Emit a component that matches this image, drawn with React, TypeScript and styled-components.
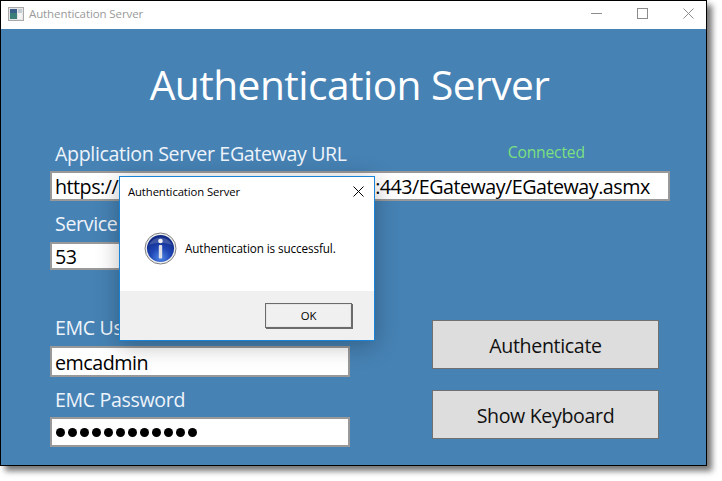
import React from "react";
import styled, { createGlobalStyle } from "styled-components";

const Global = createGlobalStyle`
  html, body { margin: 0; padding: 0; background: #fff; }
  body { font-family: "Open Sans", "Noto Sans", sans-serif; width: 722px; height: 481px; overflow: hidden; }
  * { box-sizing: border-box; }
`;

const Win = styled.div`
  position: relative; width: 707px; height: 466px; border: 1px solid #000;
  box-shadow: 5px 5px 6px rgba(0,0,0,.55);
  display: flex; flex-direction: column; background: #4682b4;
`;
const TitleBar = styled.div`
  height: 28px; flex: none; background: #fff; display: flex; align-items: center; padding: 0 0 3px 7px; gap: 5px;
`;
const BarText = styled.span`
  font-size: 11.5px; color: #9a9a9a; letter-spacing: -.1px;
`;
const WinButtons = styled.div`
  margin-left: auto; margin-right: -5px; display: flex; align-items: center;
`;
const WinBtn = styled.span`
  width: 46px; height: 25px; display: flex; align-items: center; justify-content: center; color: #8c8c8c;
`;
const Content = styled.div`
  flex: 1; padding: 0 36px 0 49px; display: flex; flex-direction: column; color: #fff;
`;
const Heading = styled.h1`
  margin: 28px 21px 0 0; font-size: 40.7px; line-height: 54px; font-weight: 400; text-align: center; letter-spacing: -.55px;
`;
const HeaderRow = styled.div`
  display: flex; margin-top: 30px; height: 30px;
`;
const Label = styled.label`
  display: block; font-size: 19.6px; line-height: 26px; padding-left: 5px; letter-spacing: -.35px; color: #eef4fb;
`;
const Status = styled.span`
  margin-left: 161px; font-size: 15.7px; line-height: 20px; color: #7be07f; letter-spacing: -.2px; margin-top: 1px;
`;
const Field = styled.input<{ $w: number; $h?: number }>`
  display: block; width: ${p => p.$w}px; height: ${p => p.$h ?? 30}px; border: 2px solid #999; background: #fff; outline: none;
  font: 400 19.7px "Open Sans", sans-serif; letter-spacing: -.5px; color: #000; padding: 1px 2px 0 3px; border-radius: 0;
`;
const Dots = styled.div`
  width: 300px; height: 30px; border: 2px solid #999; background: #fff; padding: 1px 0 0 4px;
  display: flex; align-items: center; gap: 3px;
`;
const Dot = styled.span`
  width: 9px; height: 9px; border-radius: 50%; background: #000; flex: none;
`;
const ServiceBlock = styled.div`
  margin-top: 10px; display: flex; flex-direction: column; gap: 5px;
`;
const Lower = styled.div`
  margin-top: 45px; display: flex; justify-content: space-between;
`;
const LeftCol = styled.div`
  display: flex; flex-direction: column; width: 300px;
`;
const UserLabel = styled(Label)`
  margin-bottom: 5px;
`;
const PassLabel = styled(Label)`
  margin: 10px 0 4px;
`;
const RightCol = styled.div`
  display: flex; flex-direction: column; gap: 21px; margin-top: 5px; margin-right: 11px;
`;
const BigBtn = styled.button`
  width: 227px; height: 49px; background: #ddd; border: 1px solid #707070; border-radius: 0; color: #111;
  font: 400 19.6px "Open Sans", sans-serif; letter-spacing: -.35px; padding: 1px 0 0;
`;
const Dialog = styled.div`
  position: absolute; left: 118px; top: 175px; width: 256px; height: 165px; border: 1px solid #1883d7;
  background: #fff; display: flex; flex-direction: column; box-shadow: 0 4px 22px rgba(0,0,0,.28);
`;
const DlgHead = styled.div`
  height: 28px; display: flex; align-items: center; justify-content: space-between; padding: 0 10px 0 8px;
  font-size: 11.3px; letter-spacing: -.1px; color: #000;
`;
const DlgBody = styled.div`
  flex: 1; display: flex; align-items: center; gap: 8px; padding: 0 0 0 24px; font-size: 11.7px; letter-spacing: -.1px; color: #000;
`;
const DlgFoot = styled.div`
  height: 49px; flex: none; background: #f0f0f0; display: flex; justify-content: flex-end; align-items: flex-start; padding: 12px 22px 0 0;
`;
const OkBtn = styled.button`
  width: 87px; height: 25px; background: #f0f0f0; border: 1px solid #6b6b6b; box-shadow: inset 0 0 0 1px #e6e6e6, 1px 1px 0 #6b6b6b;
  font: 400 11.3px "Open Sans", sans-serif; color: #000; padding: 0; border-radius: 0;
`;

const InfoIcon = () => (
  <svg width="33" height="33" viewBox="0 0 33 33" style={{ flex: "none" }}>
    <defs>
      <radialGradient id="ib" cx="50%" cy="85%" r="75%">
        <stop offset="0" stopColor="#4f86e6" />
        <stop offset=".5" stopColor="#1f46b4" />
        <stop offset="1" stopColor="#102a86" />
      </radialGradient>
    </defs>
    <circle cx="16.5" cy="16.5" r="15.5" fill="#efefef" stroke="#7f7f7f" />
    <circle cx="16.5" cy="16.5" r="13.6" fill="url(#ib)" />
    <path d="M5 13 A12.5 12.5 0 0 1 28 13 Q16 8 5 13Z" fill="#fff" opacity=".18" />
    <circle cx="16.5" cy="9" r="2.3" fill="#f2f2f2" />
    <rect x="14.8" y="13" width="3.4" height="13.5" rx="1" fill="#dfe1e6" />
  </svg>
);

const AppIcon = () => (
  <svg width="16" height="14" viewBox="0 0 16 14">
    <rect x=".5" y=".5" width="15" height="13" fill="#e6e6e6" stroke="#a9a9a9" />
    <rect x="2" y="2" width="7" height="10" fill="#3c7f78" />
    <rect x="2" y="2" width="7" height="4" fill="#3a5f8a" />
    <rect x="10" y="2" width="4" height="4" fill="#c4ccd4" />
    <rect x="10" y="6" width="4" height="6" fill="#f4f4f4" />
  </svg>
);

export default function App() {
  return (
    <>
      <Global />
      <Win>
        <TitleBar>
          <AppIcon />
          <BarText>Authentication Server</BarText>
          <WinButtons>
            <WinBtn>
              <svg width="11" height="11" viewBox="0 0 11 11"><path d="M0 5.5H11" stroke="currentColor" /></svg>
            </WinBtn>
            <WinBtn>
              <svg width="11" height="11" viewBox="0 0 11 11"><rect x=".5" y=".5" width="10" height="10" fill="none" stroke="currentColor" /></svg>
            </WinBtn>
            <WinBtn>
              <svg width="11" height="11" viewBox="0 0 11 11"><path d="M.5.5L10.5 10.5M10.5.5L.5 10.5" stroke="currentColor" /></svg>
            </WinBtn>
          </WinButtons>
        </TitleBar>
        <Content>
          <Heading>Authentication Server</Heading>
          <HeaderRow>
            <Label>Application Server EGateway URL</Label>
            <Status>Connected</Status>
          </HeaderRow>
          <Field $w={620} readOnly value="https://emc-appserver.domain.comp:443/EGateway/EGateway.asmx" />
          <ServiceBlock>
            <Label>Service Port</Label>
            <Field $w={150} $h={28} readOnly value="53" />
          </ServiceBlock>
          <Lower>
            <LeftCol>
              <UserLabel>EMC Username</UserLabel>
              <Field $w={300} $h={31} readOnly value="emcadmin" />
              <PassLabel>EMC Password</PassLabel>
              <Dots>
                {Array.from({ length: 12 }, (_, i) => <Dot key={i} />)}
              </Dots>
            </LeftCol>
            <RightCol>
              <BigBtn>Authenticate</BigBtn>
              <BigBtn>Show Keyboard</BigBtn>
            </RightCol>
          </Lower>
        </Content>
        <Dialog>
          <DlgHead>
            <span>Authentication Server</span>
            <svg width="11" height="11" viewBox="0 0 11 11"><path d="M.5.5L10.5 10.5M10.5.5L.5 10.5" stroke="#000" /></svg>
          </DlgHead>
          <DlgBody>
            <InfoIcon />
            <span>Authentication is successful.</span>
          </DlgBody>
          <DlgFoot><OkBtn>OK</OkBtn></DlgFoot>
        </Dialog>
      </Win>
    </>
  );
}
